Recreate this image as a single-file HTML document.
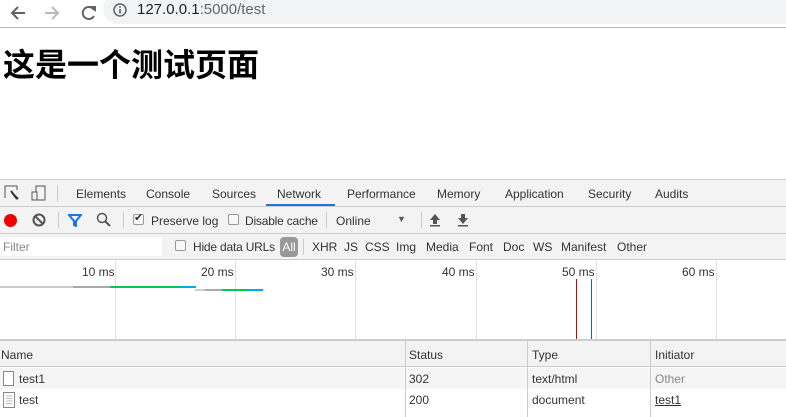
<!DOCTYPE html><html><head><meta charset="utf-8"><style>
*{margin:0;padding:0;box-sizing:border-box}
body{width:786px;height:417px;overflow:hidden;background:#fff;font-family:"Liberation Sans","Noto Sans CJK SC",sans-serif;position:relative;font-size:12px;color:#333}
.a{position:absolute;white-space:nowrap}
.t{font-size:12px;color:#333}
.v{position:absolute;width:1px;background:#e0e0e0}
.cb{position:absolute;width:11px;height:11px;border:1px solid #999;border-radius:2px;background:#f8f8f8}
</style></head><body>
<div class="a" style="left:0;top:0;width:786px;height:28px;background:#fff;border-bottom:1px solid #bbb"></div>
<svg class="a" style="left:8px;top:3px" width="90" height="20"><path d="M17 10H5M10 4L4 10L10 16" stroke="#5f6368" stroke-width="2" fill="none"/><path d="M37 10H49M44 4L50 10L44 16" stroke="#bbb" stroke-width="2" fill="none"/><path d="M86 7A6 6 0 1 0 86 13" stroke="#5f6368" stroke-width="2" fill="none"/><path d="M81 3L88 3L88 9Z" fill="#5f6368"/></svg>
<div class="a" style="left:103px;top:-6px;width:700px;height:30px;background:#f1f3f4;border-radius:15px"></div>
<svg class="a" style="left:113px;top:3px" width="14" height="14"><circle cx="7" cy="7" r="6" stroke="#5f6368" stroke-width="1.5" fill="none"/><rect x="6.2" y="6" width="1.6" height="4.5" fill="#5f6368"/><rect x="6.2" y="3.2" width="1.6" height="1.6" fill="#5f6368"/></svg>
<div class="a" style="left:137px;top:1px;font-size:15px;color:#202124">127.0.0.1<span style="color:#666">:5000/test</span></div>
<div class="a" style="left:3px;top:40px;font-size:32px;font-weight:bold;color:#000">这是一个测试页面</div>
<div class="a" style="left:0;top:179px;width:786px;height:81px;background:#f3f3f3;border-top:1px solid #ccc"></div>
<div class="a" style="left:0;top:206px;width:786px;height:1px;background:#ccc"></div>
<div class="a" style="left:0;top:233px;width:786px;height:1px;background:#ccc"></div>
<div class="a" style="left:0;top:259px;width:786px;height:1px;background:#ccc"></div>
<svg class="a" style="left:3px;top:184px" width="50" height="18"><path d="M2 14V2H14V6" stroke="#555" fill="none"/><path d="M8 7L14 15L11 11L15 15" stroke="#333" stroke-width="2" fill="none"/><rect x="33" y="2" width="9" height="14" stroke="#555" fill="none"/><rect x="29" y="8" width="5" height="8" stroke="#555" fill="#f3f3f3"/></svg>
<div class="a" style="left:57px;top:185px;width:1px;height:16px;background:#ccc"></div>
<div class="a t" style="left:76px;top:187px">Elements</div>
<div class="a t" style="left:146px;top:187px">Console</div>
<div class="a t" style="left:212px;top:187px">Sources</div>
<div class="a t" style="left:277px;top:187px">Network</div>
<div class="a" style="left:266px;top:204px;width:69px;height:2px;background:#1a73e8"></div>
<div class="a t" style="left:347px;top:187px">Performance</div>
<div class="a t" style="left:437px;top:187px">Memory</div>
<div class="a t" style="left:505px;top:187px">Application</div>
<div class="a t" style="left:588px;top:187px">Security</div>
<div class="a t" style="left:655px;top:187px">Audits</div>
<div class="a" style="left:4px;top:214px;width:13px;height:13px;border-radius:50%;background:#e00"></div>
<svg class="a" style="left:32px;top:213px" width="14" height="14"><circle cx="7" cy="7" r="5.5" stroke="#555" stroke-width="2" fill="none"/><path d="M3 3L11 11" stroke="#555" stroke-width="2"/></svg>
<div class="a" style="left:58px;top:212px;width:1px;height:16px;background:#ccc"></div>
<svg class="a" style="left:68px;top:213px" width="14" height="14"><path d="M1 2H13L8 8V13L6 12V8Z" stroke="#1a73e8" stroke-width="2" fill="none"/></svg>
<svg class="a" style="left:96px;top:212px" width="16" height="16"><circle cx="6" cy="6" r="4.5" stroke="#555" stroke-width="1.5" fill="none"/><path d="M9 9L14 14" stroke="#555" stroke-width="2"/></svg>
<div class="a" style="left:123px;top:212px;width:1px;height:16px;background:#ccc"></div>
<div class="cb" style="left:133px;top:214px"></div><div class="a" style="left:134px;top:211px;font-size:11px;color:#333">✔</div>
<div class="a t" style="left:151px;top:214px">Preserve log</div>
<div class="cb" style="left:228px;top:214px"></div>
<div class="a t" style="left:245px;top:214px;letter-spacing:-0.2px">Disable cache</div>
<div class="a" style="left:326px;top:212px;width:1px;height:16px;background:#ccc"></div>
<div class="a t" style="left:336px;top:214px">Online</div>
<div class="a" style="left:397px;top:214px;font-size:9px;color:#555">▼</div>
<div class="a" style="left:421px;top:212px;width:1px;height:16px;background:#ccc"></div>
<svg class="a" style="left:429px;top:213px" width="40" height="14"><path d="M6 1L1 7H4V11H8V7H11Z" fill="#555"/><rect x="1" y="12" width="10" height="1.5" fill="#555"/><path d="M34 11L29 5H32V1H36V5H39Z" fill="#555"/><rect x="29" y="12" width="10" height="1.5" fill="#555"/></svg>
<div class="a" style="left:0;top:237px;width:162px;height:19px;background:#fff"></div>
<div class="a" style="left:3px;top:240px;color:#888">Filter</div>
<div class="cb" style="left:175px;top:240px"></div>
<div class="a t" style="left:193px;top:240px;letter-spacing:-0.2px">Hide data URLs</div>
<div class="a" style="left:280px;top:237px;width:18px;height:20px;background:#999;border-radius:4px;color:#fff;font-size:12px;text-align:center;line-height:20px">All</div>
<div class="a" style="left:303px;top:239px;width:1px;height:16px;background:#ccc"></div>
<div class="a t" style="left:312px;top:240px">XHR</div>
<div class="a t" style="left:344px;top:240px">JS</div>
<div class="a t" style="left:365px;top:240px">CSS</div>
<div class="a t" style="left:396px;top:240px">Img</div>
<div class="a t" style="left:426px;top:240px">Media</div>
<div class="a t" style="left:469px;top:240px">Font</div>
<div class="a t" style="left:503px;top:240px">Doc</div>
<div class="a t" style="left:533px;top:240px">WS</div>
<div class="a t" style="left:561px;top:240px">Manifest</div>
<div class="a t" style="left:617px;top:240px">Other</div>
<div class="v" style="left:115px;top:260px;height:80px"></div>
<div class="v" style="left:235px;top:260px;height:80px"></div>
<div class="v" style="left:355px;top:260px;height:80px"></div>
<div class="v" style="left:476px;top:260px;height:80px"></div>
<div class="v" style="left:596px;top:260px;height:80px"></div>
<div class="v" style="left:716px;top:260px;height:80px"></div>
<div class="a t" style="left:82px;top:265px">10 ms</div>
<div class="a t" style="left:201px;top:265px">20 ms</div>
<div class="a t" style="left:321px;top:265px">30 ms</div>
<div class="a t" style="left:442px;top:265px">40 ms</div>
<div class="a t" style="left:562px;top:265px">50 ms</div>
<div class="a t" style="left:682px;top:265px">60 ms</div>
<div class="a" style="left:0;top:286px;width:73px;height:2px;background:#ccc"></div>
<div class="a" style="left:73px;top:286px;width:37px;height:2px;background:#aaa"></div>
<div class="a" style="left:110px;top:286px;width:70px;height:2px;background:#00c853"></div>
<div class="a" style="left:180px;top:286px;width:16px;height:2px;background:#03a9f4"></div>
<div class="a" style="left:195px;top:289px;width:10px;height:2px;background:#ccc"></div>
<div class="a" style="left:205px;top:289px;width:17px;height:2px;background:#aaa"></div>
<div class="a" style="left:222px;top:289px;width:26px;height:2px;background:#00c853"></div>
<div class="a" style="left:248px;top:289px;width:15px;height:2px;background:#03a9f4"></div>
<div class="a" style="left:576px;top:279px;width:1px;height:60px;background:#c00"></div>
<div class="a" style="left:591px;top:279px;width:1px;height:60px;background:#1a5fc8"></div>
<div class="a" style="left:0;top:339px;width:786px;height:2px;background:#ccc"></div>
<div class="a" style="left:0;top:341px;width:786px;height:26px;background:#f3f3f3;border-bottom:1px solid #ccc"></div>
<div class="a" style="left:0;top:368px;width:786px;height:21px;background:#f5f5f5"></div>
<div class="v" style="left:405px;top:341px;height:76px;background:#ccc"></div>
<div class="v" style="left:527px;top:341px;height:76px;background:#ccc"></div>
<div class="v" style="left:650px;top:341px;height:76px;background:#ccc"></div>
<div class="a t" style="left:1px;top:348px">Name</div>
<div class="a t" style="left:409px;top:348px">Status</div>
<div class="a t" style="left:532px;top:348px">Type</div>
<div class="a t" style="left:655px;top:348px">Initiator</div>
<div class="a" style="left:3px;top:371px;width:11px;height:15px;border:1px solid #888;background:#fff"></div>
<div class="a t" style="left:19px;top:372px">test1</div>
<div class="a t" style="left:409px;top:372px">302</div>
<div class="a t" style="left:532px;top:372px">text/html</div>
<div class="a t" style="left:655px;top:372px;color:#888">Other</div>
<svg class="a" style="left:3px;top:392px" width="12" height="16"><rect x="0.5" y="0.5" width="11" height="15" stroke="#888" fill="#fff"/><path d="M3 4H9M3 6.5H9M3 9H9M3 11.5H9" stroke="#bbb"/></svg>
<div class="a t" style="left:19px;top:393px">test</div>
<div class="a t" style="left:409px;top:393px">200</div>
<div class="a t" style="left:532px;top:393px">document</div>
<div class="a t" style="left:655px;top:393px;text-decoration:underline">test1</div>
</body></html>
